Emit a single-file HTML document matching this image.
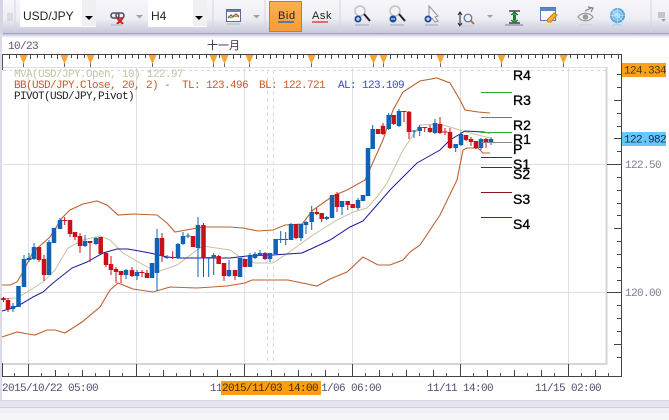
<!DOCTYPE html>
<html><head><meta charset="utf-8"><style>
html,body{margin:0;padding:0;background:#fff;width:669px;height:420px;overflow:hidden}
svg{display:block}
text{font-family:"Liberation Mono","Noto Sans CJK SC",monospace;font-size:11px;letter-spacing:-.6px}
.pv{font-family:"Liberation Sans",sans-serif;font-size:14px;fill:#000;stroke:#000;stroke-width:.35;letter-spacing:0}
</style></head><body>
<svg width="669" height="420" viewBox="0 0 669 420" xmlns="http://www.w3.org/2000/svg">
<defs>
<linearGradient id="tb" x1="0" y1="0" x2="0" y2="1"><stop offset="0" stop-color="#f6f6fb"/><stop offset=".55" stop-color="#eeeef5"/><stop offset="1" stop-color="#c8c8dc"/></linearGradient>
<linearGradient id="sh" x1="0" y1="0" x2="0" y2="1"><stop offset="0" stop-color="#c4c4d8"/><stop offset="1" stop-color="#fff"/></linearGradient>
<linearGradient id="btn" x1="0" y1="0" x2="0" y2="1"><stop offset="0" stop-color="#fcb04f"/><stop offset="1" stop-color="#fa9a38"/></linearGradient>
<radialGradient id="rad" cx=".45" cy=".45" r=".6"><stop offset="0" stop-color="#a8dcf4"/><stop offset="1" stop-color="#3a94d8"/></radialGradient>
</defs>
<rect width="669" height="420" fill="#fff"/>
<!-- toolbar -->
<rect x="0" y="0" width="669" height="33" fill="url(#tb)"/>
<rect x="0" y="33" width="669" height="1" fill="#a4a4c2"/>
<rect x="0" y="34" width="669" height="4" fill="url(#sh)"/>
<rect x="0" y="0" width="3" height="34" fill="#d4d4e2"/>
<path d="M8 13V21M10 13V21M12 13V21" stroke="#c8c8d4" fill="none"/>
<path d="M15 0V32M213 0V32M265 0V32M340 0V32M651 0V32" stroke="#d4d4e0"/>
<rect x="20" y="0" width="76" height="27" fill="#fff"/>
<rect x="82" y="0" width="14" height="26" fill="#efeff4"/>
<text x="23" y="20" style="font-size:12px;font-family:'Liberation Sans';letter-spacing:0" fill="#222">USD/JPY</text>
<path d="M85 16h8l-4 4z" fill="#000"/>
<rect x="148" y="0" width="59" height="27" fill="#fff"/>
<rect x="193" y="0" width="14" height="26" fill="#efeff4"/>
<text x="151" y="20" style="font-size:12px;font-family:'Liberation Sans';letter-spacing:0" fill="#222">H4</text>
<path d="M195 16h8l-4 4z" fill="#000"/>
<!-- link icon -->
<g fill="none" stroke="#505060" stroke-width="1.6"><rect x="111" y="13" width="8" height="5" rx="2.5"/><rect x="116" y="13" width="8" height="5" rx="2.5"/></g>
<path d="M117 18l6 6M123 18l-6 6" stroke="#e01818" stroke-width="2"/>
<path d="M111 25h12" stroke="#c8c8d4" stroke-width="2"/>
<path d="M136 15h7l-3.500 3.500zM253 15h7l-3.500 3.500zM487 15h6l-3 3z" fill="#a0a0ac"/>
<!-- chart icon -->
<rect x="226.500" y="9.500" width="14" height="12" fill="#fff" stroke="#5a6a90"/>
<rect x="227" y="10" width="13" height="2" fill="#6a80b8"/>
<path d="M228 18l3-3 2 2 3-3 3 3" fill="none" stroke="#d03030" stroke-width="1.200"/>
<path d="M228 16l3 2 3-3 2 2 3-2" fill="none" stroke="#40a040" stroke-width=".8"/>
<path d="M227 24h13" stroke="#c8c8d4" stroke-width="2"/>
<!-- Bid/Ask -->
<rect x="269.500" y="1.500" width="32" height="30" fill="url(#btn)" stroke="#a88450"/>
<text x="278" y="19" style="font-size:11px;font-family:'Liberation Sans';letter-spacing:.6px" fill="#222">Bid</text>
<rect x="278" y="21" width="16" height="2" fill="#5a7a9c"/>
<text x="312" y="19" style="font-size:11px;font-family:'Liberation Sans';letter-spacing:.6px" fill="#222">Ask</text>
<rect x="312" y="21" width="16" height="2" fill="#e07060"/>
<!-- zoom + -->
<g>
<circle cx="360" cy="11" r="5" fill="#f4f4f4" stroke="#c0c0c8" stroke-width="1.500"/>
<path d="M364 14l6 7" stroke="#222" stroke-width="2"/>
<circle cx="358" cy="19" r="3.500" fill="#1c4a96"/><path d="M356 19h4M358 17v4" stroke="#fff"/>
<path d="M355 25h14" stroke="#c0c0d0" stroke-width="2"/>
<circle cx="395" cy="11" r="5" fill="#f4f4f4" stroke="#c0c0c8" stroke-width="1.500"/>
<path d="M399 14l6 7" stroke="#222" stroke-width="2"/>
<circle cx="393" cy="19" r="3.500" fill="#1c4a96"/><path d="M391 19h4" stroke="#fff"/>
<path d="M390 25h14" stroke="#c0c0d0" stroke-width="2"/>
<path d="M429 6v14l3-2 3 4 3-1-3-4 3-1z" fill="#f4f4f4" stroke="#909098"/>
<circle cx="428" cy="19" r="3.500" fill="#1c4a96"/><path d="M426 19h4M428 17v4" stroke="#fff"/>
<path d="M425 25h13" stroke="#c0c0d0" stroke-width="2"/>
<path d="M460 13v12M458 15l2-3 2 3M458 23l2 3 2-3" fill="none" stroke="#222"/>
<circle cx="468" cy="18" r="3.800" fill="#e8f0f8" stroke="#607088" stroke-width="1.200"/>
<path d="M471 21l3 3" stroke="#c06030" stroke-width="1.600"/>
<path d="M460 26h14" stroke="#c8c8d4"/>
<!-- ibeam -->
<path d="M509 11h11M509 23h11" stroke="#222" stroke-width="1.200"/>
<path d="M514.500 12v11" stroke="#1e7a2e" stroke-width="3"/>
<path d="M511 15l3.500-3 3.500 3M511 20l3.500 3 3.500-3" fill="#38a848" stroke="#1e6a2e"/>
<path d="M505 25h18" stroke="#aaaabc" stroke-width="2"/>
<!-- window -->
<rect x="540.500" y="7.500" width="15" height="13" fill="#fff" stroke="#5a7ac0"/>
<rect x="541" y="8" width="14" height="3" fill="#5c84d0"/>
<path d="M547 20l7-7 3 2-6 7h-3z" fill="#f8b030" stroke="#c88010"/>
<path d="M541 25h15" stroke="#e8dcc0" stroke-width="2"/>
<!-- eye -->
<path d="M578 17c4-5 11-5 15 0-4 5-11 5-15 0z" fill="#f4f4f4" stroke="#9a9aa0" stroke-width="1.300"/>
<circle cx="585.500" cy="17" r="2.800" fill="#9a9aa0"/>
<path d="M585 11l6-3M588 7l5 1-2 4" fill="none" stroke="#808088" stroke-width="1.200"/>
<path d="M579 25h13" stroke="#d4d4dc" stroke-width="2"/>
<!-- radar -->
<circle cx="617.500" cy="15.500" r="7.500" fill="url(#rad)"/>
<g fill="none" stroke="#d0ecfa" stroke-width=".6"><circle cx="617.500" cy="15.500" r="5"/><circle cx="617.500" cy="15.500" r="2.500"/><path d="M610 15.500h15M617.500 8v15M612 10l11 11"/></g>
<path d="M612 26l5-2 5 2" stroke="#b0d4ec" stroke-width="2" fill="none"/>
<!-- list -->
<path d="M658 13h7M658 15h7M658 17h7" stroke="#9a9aa6"/><path d="M661 19h5l-2.500 2.500z" fill="#9a9aa6"/>

<!-- left border -->
<rect x="0" y="34" width="2" height="366" fill="#dcdce8"/>

<!-- plot -->
<path d="M28.500 67V364M136.500 67V364M244.500 67V364M352.500 67V364M460.500 67V364M568.500 67V364M3 164.500H607M3 292.500H607" stroke="#dfe0e6"/>
<path d="M3 67.500H606" stroke="#dfe0e6"/>
<path d="M3 70.500H606" stroke="#d8d8de" stroke-dasharray="3 3"/>
<path d="M267.500 70V363M273.500 70V363" stroke="#dcdce2" stroke-dasharray="4 3"/>
<path d="M606.500 67V364H3" fill="none" stroke="#d4d6dc" stroke-width="2"/>

<!-- top ruler -->
<path d="M2.500 67V54.500H621.500V376.500H2.500V363" fill="none" stroke="#444"/>
<path d="M2.500 54V70" stroke="#555"/>
<path d="M9.500 55v4M16.500 55v3M30.500 55v4M37.500 55v3M44.500 55v4M51.500 55v3M57.500 55v4M71.500 55v3M77.500 55v4M84.500 55v3M98.500 55v4M105.500 55v3M111.500 55v4M118.500 55v3M125.500 55v4M132.500 55v3M138.500 55v4M145.500 55v3M159.500 55v4M165.500 55v3M172.500 55v4M179.500 55v3M186.500 55v4M192.500 55v3M199.500 55v4M206.500 55v3M219.500 55v3M233.500 55v4M240.500 55v3M256.500 55v4M263.500 55v3M270.500 55v4M276.500 55v3M283.500 55v4M290.500 55v3M297.500 55v4M303.500 55v3M318.500 55v4M325.500 55v3M331.500 55v4M338.500 55v3M345.500 55v4M352.500 55v3M358.500 55v4M365.500 55v3M390.500 55v4M397.500 55v3M404.500 55v4M411.500 55v3M417.500 55v4M424.500 55v3M431.500 55v4M447.500 55v3M454.500 55v4M461.500 55v3M467.500 55v4M474.500 55v3M481.500 55v4M488.500 55v3M494.500 55v4M508.500 55v3M515.500 55v4M521.500 55v3M528.500 55v4M535.500 55v3M542.500 55v4M548.500 55v3M555.500 55v4M570.500 55v3M577.500 55v4M584.500 55v3M591.500 55v4M597.500 55v3M604.500 55v4M611.500 55v3M618.500 55v4" stroke="#444" fill="none"/>
<path d="M23.500 60v7M64.500 60v7M90.500 60v7M152.500 60v7M213.500 60v7M224.500 60v7M249.500 60v7M311.500 60v7M373.500 60v7M383.500 60v7M440.500 60v7M501.500 60v7M563.500 60v7" stroke="#666"/>
<path d="M19.500 55h8l-4 9zM60.500 55h8l-4 9zM86.500 55h8l-4 9zM148.500 55h8l-4 9zM209.500 55h8l-4 9zM220.500 55h8l-4 9zM245.500 55h8l-4 9zM307.500 55h8l-4 9zM369.500 55h8l-4 9zM379.500 55h8l-4 9zM436.500 55h8l-4 9zM497.500 55h8l-4 9zM559.500 55h8l-4 9z" fill="#f6a534"/>
<text x="8" y="49" fill="#555570">10/23</text>
<text x="207" y="49" style="font-size:11px;font-family:'Noto Sans CJK SC',sans-serif;letter-spacing:0" fill="#333348">十一月</text>

<!-- right axis ticks -->
<path d="M617 74.500h4M617 87.500h4M614 100.500h7M617 113.500h4M617 126.500h4M614 138.500h7M617 151.500h4M607 164.500h14M617 177.500h4M617 190.500h4M617 203.500h4M617 215.500h4M614 228.500h7M617 241.500h4M617 254.500h4M617 267.500h4M617 280.500h4M607 292.500h14M617 305.500h4M617 318.500h4M617 331.500h4M614 344.500h7M617 357.500h4" stroke="#444" fill="none"/>
<rect x="622" y="63" width="44" height="14" fill="#f9a118"/>
<text x="624" y="73.500" fill="#4a3a10">124.334</text>
<rect x="622" y="132" width="44" height="14" fill="#66c8fa"/>
<text x="624" y="142.500" fill="#102a50">122.982</text>
<text x="625" y="168" fill="#7c7c96">122.50</text>
<text x="625" y="296" fill="#7c7c96">120.00</text>

<!-- bottom ticks -->
<path d="M28.500 364v12M136.500 364v12M244.500 364v12M352.500 364v12M460.500 364v12M568.500 364v12" stroke="#444"/>
<path d="M55.500 370v6M82.500 370v6M109.500 370v6M163.500 370v6M190.500 370v6M217.500 370v6M271.500 370v6M298.500 370v6M325.500 370v6M379.500 370v6M406.500 370v6M433.500 370v6M487.500 370v6M514.500 370v6M541.500 370v6M595.500 370v6" stroke="#444"/>
<path d="M14.500 373v3M41.500 373v3M68.500 373v3M95.500 373v3M122.500 373v3M149.500 373v3M176.500 373v3M203.500 373v3M230.500 373v3M257.500 373v3M284.500 373v3M311.500 373v3M338.500 373v3M365.500 373v3M392.500 373v3M419.500 373v3M446.500 373v3M473.500 373v3M500.500 373v3M527.500 373v3M554.500 373v3M581.500 373v3M608.500 373v3" stroke="#555"/>
<text x="2" y="391" fill="#50506e">2015/10/22 05:00</text>
<text x="210" y="391" fill="#50506e">11</text>
<text x="321" y="391" fill="#50506e">1/06 06:00</text>
<text x="427" y="391" fill="#50506e">11/11 14:00</text>
<text x="535" y="391" fill="#50506e">11/15 02:00</text>
<rect x="221" y="381" width="100" height="14" fill="#f99e0c"/>
<text x="222" y="391" fill="#4a2a08">2015/11/03 14:00</text>

<!-- indicators -->
<path d="M0 299L17 298L27 292L43 282L55 270L68 248L83 240L100 236L110 240L123 253L140 263L157 272L177 265L197 250L203 246L230 250L240 257L255 263L273 263L288 253L313 235L337 220L353 212L367 208L377 197L387 183L403 150L420 125L440 124L453 128L470 133L490 138" fill="none" stroke="#c8c09c"/>
<path d="M2 311L13 308L23 303L33 297L43 292L53 283L72 268L87 262L103 253L117 249L128 249L150 253L167 257L180 258L197 258L230 258L247 256L273 255L302 253L313 248L330 240L350 227L363 221L377 205L390 190L400 180L417 163L440 150L450 140L465 131L483 132L490 133" fill="none" stroke="#1a1a9c"/>
<path d="M2 285L10 285L17 282L23 272L33 252L50 237L62 218L70 210L83 204L97 201L107 205L118 215L133 214L157 215L167 223L175 232L197 228L203 227L230 227L243 228L258 231L273 230L285 225L302 224L313 210L333 196L347 190L365 180L383 140L393 110L403 92L420 81L437 78L450 83L460 100L465 110L478 112L490 113" fill="none" stroke="#bc6230" stroke-width="1.100"/>
<path d="M2 337L17 332L28 334L35 335L47 330L55 330L65 333L82 322L100 307L110 290L118 283L133 289L153 292L170 287L197 288L227 286L245 283L252 280L288 280L317 286L330 279L347 272L363 257L378 265L390 265L403 260L410 252L420 245L440 215L457 180L463 150L467 148L478 148L483 153L490 153" fill="none" stroke="#bc6230" stroke-width="1.100"/>

<!-- candles wicks -->
<path fill="none" stroke="#0f62b4" d="M13 303V312M24 255V287M29 253V262M34 243V260M49 240V275M60 218V229M85 235V247M96 237V245M126 269V279M137 270V280M157 229V291M167 255V259M178 243V259M183 232V245M188 233V238M198 217V277M208.700 257V277M213.700 253V275M229 260V277M250 253V267M255 252V259M260 250V256M270 253V262M280.700 231V243M285.700 232V245M291 223V240M301 224V241M306 221V234M311.700 206V230M326.700 216V220M342 201V215M358 198V210M372.700 125V149M388.700 113V130M399 109V127M414 130V138M419.700 125V136M435 119V134M455.700 144V152M461 132V146M481 138V150M491 137V145"/>
<path fill="none" stroke="#c81018" d="M3.500 297V302M8 298V312M39 247V262M44 255V281M64.700 217V225M70 220V237M75 232V240M80 233V253M90 241V262M106 252V267M111 256V275M116 267V283M121 271V283M132 267V277M142 270V277M147 270V278M162 233V262M172.700 251V259M203.500 223V277M218.700 255V264M224 263V281M235 270V280M296 224V239M316.700 208V215M321.700 213V222M337 192V212M347.700 201V210M383 123V135M393.700 115V125M404 111V122M409 111V139M424.700 127V132M430 125V133M440 117V134M445 128V135M450 128V149M466 135V141M471 137V146M476 141V149M486 138V148"/>
<!-- candle bodies -->
<path fill="none" stroke="#0f62b4" stroke-width="4.500" d="M13 306V309M18.500 286V307M24 259V287M34 247V259M49 242V275M54 228V243M60 220V229M85 241V246M96 238V244M126 270V275M137 272V276M152 263V278M157 238V273M178 244V258M183 236V244M198 225V248M213.700 255V258M229 270V276M240 258V277M250 255V267M255 254V258M260 253V256M270 253V259M275.700 239V254M291 224V240M301 224V238M306 222V225M311.700 212V222M326.700 217V219M332 195V218M342 201V207M358 200V208M363 195V201M368 148V196M372.700 129V149M388.700 115V129M399 111V126M419.700 127V131M435 123V133M455.700 144V148M461 134V145M481 139V148M491 139V143"/>
<path fill="none" stroke="#0f62b4" stroke-width="5" d="M29 258V260M167 257V258M188 235.500V236.500M208.700 257V258M280.700 239V240M285.700 239V240M414 130.500V131.500"/>
<path fill="none" stroke="#c81018" stroke-width="4.500" d="M3.500 298V300M8 300V309M39 247V260M44 259V275M70 220V234M75 232V237M80 236V246M90 241V243M100.700 237V254M106 253V265M111 264V270M116 269V272M121 271V275M132 270V276M147 273V278M162 238V256M193 236V247M203.500 225V258M218.700 256V264M224 263V276M235 270V276M245 259V267M296 224V238M316.700 212V214M321.700 213V219M337 194V207M347.700 201V205M352.700 204V208M378 129V134M383 125.700V134M393.700 115V124M409 111.700V132M430 128V132M440 124V133M450 132V148M466 135V140M471 139V142M476 141V148M486 139V143"/>
<path fill="none" stroke="#c81018" stroke-width="5" d="M64.700 220V221M142 272V273M172.700 257V258M404 111V112M424.700 127V128M445 131.500V132.500"/>
<path fill="none" stroke="#861c6a" stroke-width="4.500" d="M265 253V259"/>
<path fill="none" stroke="#861c6a" d="M265 252V260"/>

<!-- pivot lines -->
<path d="M481 92.500H512M481 117.500H512M481 132.500H512" stroke="#30a830"/>
<path d="M481 142.500H512" stroke="#888"/>
<path d="M481 157.500H512M481 167.500H512M481 192.500H512M481 217.500H512" stroke="#8c1414"/>
<text class="pv" x="513" y="80">R4</text>
<text class="pv" x="513" y="105">R3</text>
<text class="pv" x="513" y="130">R2</text>
<text class="pv" x="513" y="144">R1</text>
<text class="pv" x="513" y="154">P</text>
<text class="pv" x="513" y="169">S1</text>
<text class="pv" x="513" y="179">S2</text>
<text class="pv" x="513" y="204">S3</text>
<text class="pv" x="513" y="229">S4</text>

<!-- legend -->
<text x="14" y="77" fill="#c4c6a4">MVA(USD/JPY.Open, 10) :</text>
<text x="147" y="77" fill="#c4c6a4">122.97</text>
<text x="14" y="88" fill="#c85a28">BB(USD/JPY.Close, 20, 2) -</text>
<text x="182" y="88" fill="#c85a28">TL: 123.496</text>
<text x="259" y="88" fill="#c85a28">BL: 122.721</text>
<text x="338" y="88" fill="#3a48c8">AL: 123.109</text>
<text x="14" y="99" fill="#222">PIVOT(USD/JPY,Pivot)</text>

<!-- bottom bars -->
<rect x="0" y="400" width="669" height="1" fill="#d8d8e2"/>
<rect x="0" y="401" width="669" height="6" fill="#e4e4ef"/>
<rect x="0" y="407" width="669" height="1" fill="#cfcfdb"/>
<rect x="0" y="408" width="669" height="5" fill="#f0f0f5"/>
<rect x="0" y="413" width="669" height="7" fill="#f5f5f8"/>
</svg>
</body></html>
